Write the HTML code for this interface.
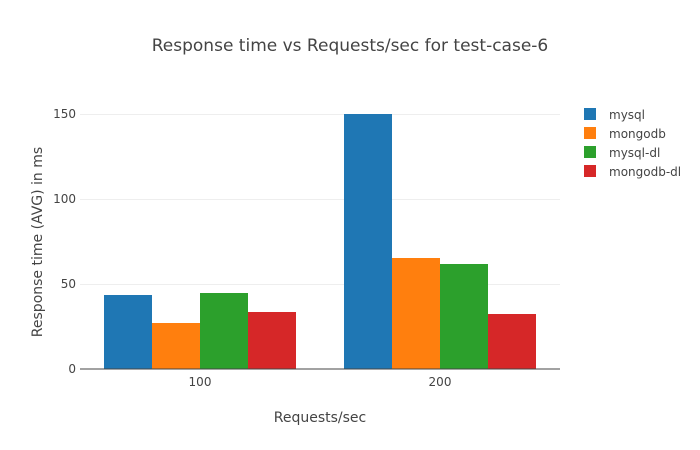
<!DOCTYPE html>
<html><head><style>html,body{margin:0;padding:0;background:#fff}</style></head><body>
<svg width="700" height="450" xmlns="http://www.w3.org/2000/svg" style="font-family:'DejaVu Sans','Liberation Sans',sans-serif;display:block">
<rect width="700" height="450" fill="#fff"/>
<g stroke="#eee" stroke-width="1">
<line x1="80" x2="560" y1="284.5" y2="284.5"/>
<line x1="80" x2="560" y1="199.5" y2="199.5"/>
<line x1="80" x2="560" y1="114.5" y2="114.5"/>
</g>
<rect x="104" y="295" width="48" height="74" fill="#1f77b4"/>
<rect x="152" y="323" width="48" height="46" fill="#ff7f0e"/>
<rect x="200" y="293" width="48" height="76" fill="#2ca02c"/>
<rect x="248" y="312" width="48" height="57" fill="#d62728"/>
<rect x="344" y="114" width="48" height="255" fill="#1f77b4"/>
<rect x="392" y="258" width="48" height="111" fill="#ff7f0e"/>
<rect x="440" y="264" width="48" height="105" fill="#2ca02c"/>
<rect x="488" y="314" width="48" height="55" fill="#d62728"/>
<line x1="80" x2="560" y1="369" y2="369" stroke="#444" stroke-width="1"/>
<g font-size="12" fill="#444">
<text x="76" y="373" text-anchor="end">0</text>
<text x="76" y="288" text-anchor="end">50</text>
<text x="76" y="203" text-anchor="end">100</text>
<text x="76" y="118" text-anchor="end">150</text>
<text x="200" y="386" text-anchor="middle">100</text>
<text x="440" y="386" text-anchor="middle">200</text>
<text x="609" y="119">mysql</text>
<text x="609" y="138">mongodb</text>
<text x="609" y="157">mysql-dl</text>
<text x="609" y="176">mongodb-dl</text>
</g>
<rect x="584" y="108" width="12" height="12" fill="#1f77b4"/>
<rect x="584" y="127" width="12" height="12" fill="#ff7f0e"/>
<rect x="584" y="146" width="12" height="12" fill="#2ca02c"/>
<rect x="584" y="165" width="12" height="12" fill="#d62728"/>
<text x="350" y="51" text-anchor="middle" font-size="17" fill="#444">Response time vs Requests/sec for test-case-6</text>
<text x="320" y="422" text-anchor="middle" font-size="14" fill="#444">Requests/sec</text>
<text transform="translate(42,242) rotate(-90)" text-anchor="middle" font-size="14" fill="#444">Response time (AVG) in ms</text>
</svg>
</body></html>
